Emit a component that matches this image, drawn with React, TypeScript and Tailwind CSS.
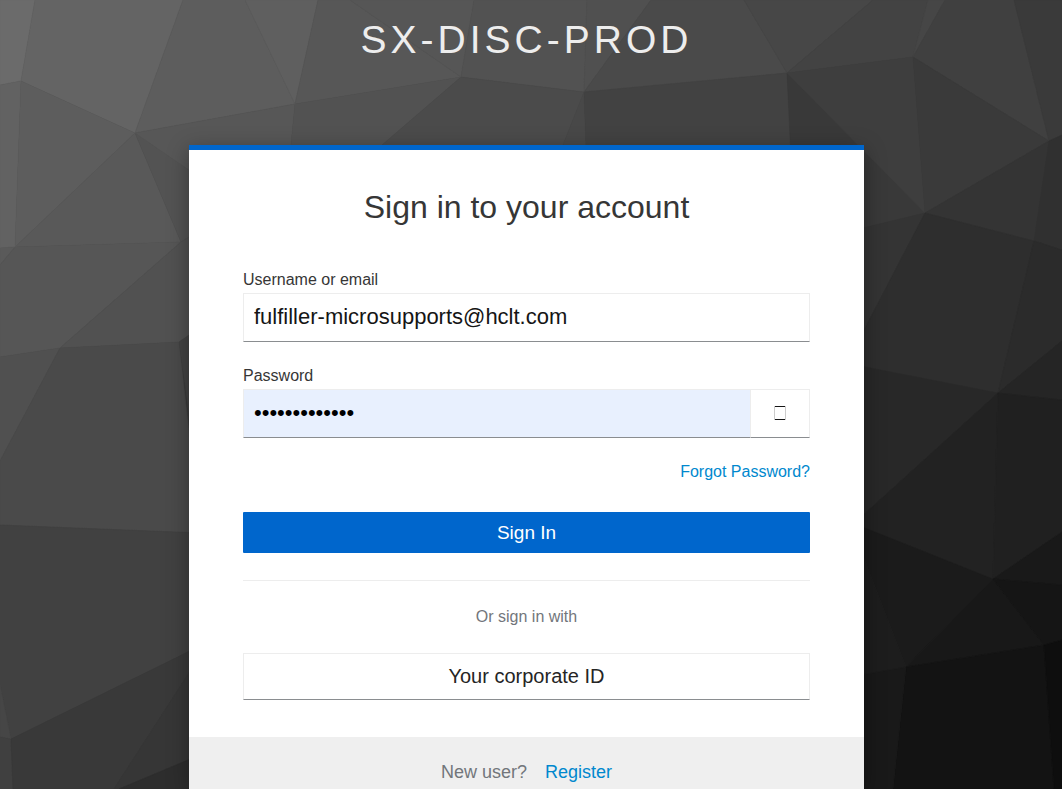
import React, { useState } from "react";

interface Facet {
  points: string;
  fill: string;
}

const facets: Facet[] = [
  // top row
  { points: "0,0 35,0 21,81 0,85", fill: "#6b6b6b" },
  { points: "35,0 183,0 135,133 21,81", fill: "#646464" },
  { points: "183,0 245,0 295,104 135,133", fill: "#5d5d5d" },
  { points: "245,0 318,0 295,104", fill: "#5f5f5f" },
  { points: "318,0 350,0 461,77 295,104", fill: "#575757" },
  { points: "350,0 474,0 461,77", fill: "#565656" },
  { points: "474,0 587,0 584,92 461,77", fill: "#525252" },
  { points: "587,0 651,0 584,92", fill: "#505050" },
  { points: "651,0 744,0 787,73 584,92", fill: "#4a4a4a" },
  { points: "744,0 873,0 787,73", fill: "#474747" },
  { points: "873,0 928,0 913,57 787,73", fill: "#434343" },
  { points: "928,0 945,0 913,57", fill: "#464646" },
  { points: "945,0 1014,0 1049,141 913,57", fill: "#404040" },
  { points: "1014,0 1062,0 1062,135 1049,141", fill: "#3a3a3a" },
  // left side
  { points: "0,85 21,81 15,247 0,248", fill: "#626262" },
  { points: "21,81 135,133 15,247", fill: "#5d5d5d" },
  { points: "135,133 181,242 15,247", fill: "#595959" },
  { points: "135,133 240,205 181,242", fill: "#535353" },
  { points: "135,133 295,104 285,205 240,205", fill: "#575757" },
  { points: "0,248 15,247 0,265", fill: "#5a5a5a" },
  { points: "15,247 181,242 60,348 0,357 0,265", fill: "#565656" },
  { points: "0,357 60,348 0,461", fill: "#505050" },
  { points: "181,242 240,205 240,300 179,342 60,348", fill: "#515151" },
  { points: "60,348 179,342 200,533 0,525 0,461", fill: "#4a4a4a" },
  { points: "179,342 240,300 240,400 190,420", fill: "#434343" },
  { points: "0,525 200,533 200,646 11,739 0,685", fill: "#414141" },
  { points: "0,685 11,739 0,737", fill: "#464646" },
  { points: "0,737 11,739 13,789 0,789", fill: "#404040" },
  { points: "11,739 200,646 200,656 114,789 13,789", fill: "#393939" },
  { points: "200,656 200,755 119,789 114,789", fill: "#363636" },
  { points: "200,755 200,789 119,789", fill: "#2d2d2d" },
  // strip above the card
  { points: "295,104 461,77 382,145 360,200 285,205", fill: "#525252" },
  { points: "461,77 584,92 563,145 540,200 382,200 382,145", fill: "#4b4b4b" },
  { points: "584,92 588,200 540,200 563,145", fill: "#484848" },
  { points: "584,92 787,73 795,200 588,200", fill: "#424242" },
  // right side
  { points: "787,73 925,213 864,228 795,245", fill: "#393939" },
  { points: "787,73 913,57 925,213", fill: "#3e3e3e" },
  { points: "913,57 1049,141 925,213", fill: "#3a3a3a" },
  { points: "1049,141 1034,241 925,213", fill: "#343434" },
  { points: "1049,141 1062,135 1062,250 1034,241", fill: "#303030" },
  { points: "850,231 925,213 850,357", fill: "#343434" },
  { points: "925,213 1034,241 998,393 850,364 850,357", fill: "#2e2e2e" },
  { points: "1034,241 1062,250 1062,341 998,393", fill: "#2b2b2b" },
  { points: "998,393 1062,341 1062,400", fill: "#252525" },
  { points: "850,364 998,393 850,527", fill: "#282828" },
  { points: "998,393 993,579 850,522 850,527", fill: "#222222" },
  { points: "998,393 1062,400 1062,532 993,579", fill: "#202020" },
  { points: "850,522 993,579 906,667", fill: "#1b1b1b" },
  { points: "850,522 906,667 850,677", fill: "#1d1d1d" },
  { points: "993,579 1062,532 1062,585", fill: "#191919" },
  { points: "993,579 1044,645 906,667", fill: "#181818" },
  { points: "993,579 1062,585 1062,640 1044,645", fill: "#151515" },
  { points: "906,667 1044,645 1054,789 893,789", fill: "#131313" },
  { points: "850,677 906,667 893,789 850,789", fill: "#191919" },
  { points: "1044,645 1062,640 1062,789 1054,789", fill: "#0e0e0e" },
];

const Background: React.FC = () => (
  <svg
    className="absolute inset-0 -z-10 h-full w-full"
    viewBox="0 0 1062 789"
    preserveAspectRatio="xMidYMid slice"
    aria-hidden="true"
  >
    {facets.map((facet) => (
      <polygon
        key={facet.points}
        points={facet.points}
        fill={facet.fill}
        stroke={facet.fill}
        strokeWidth="0.5"
      />
    ))}
  </svg>
);

const App: React.FC = () => {
  const [username, setUsername] = useState("fulfiller-microsupports@hclt.com");
  const [password, setPassword] = useState("corporate1234");
  const [visible, setVisible] = useState(false);

  return (
    <div className="relative isolate flex min-h-screen flex-col bg-[#393939] pr-[9px] font-['Liberation_Sans',Arial,sans-serif] text-[#363636]">
      <Background />
      <header className="pt-4 pb-[81px] text-center">
        <h1 className="text-[39px] leading-[48px] tracking-[4px] text-[#ededed] uppercase">
          SX-DISC-PROD
        </h1>
      </header>

      <main className="mx-auto flex w-full max-w-[675px] grow flex-col border-t-[5px] border-[#0066cc] bg-white shadow-[0_5px_20px_rgba(0,0,0,0.35)]">
        <div className="px-[54px] py-[37px]">
          <h2 className="text-center text-[32px] leading-10">
            Sign in to your account
          </h2>

          <form className="pt-[43px]" onSubmit={(e) => e.preventDefault()}>
            <label
              htmlFor="username"
              className="mb-[3px] block text-base leading-5"
            >
              Username or email
            </label>
            <input
              id="username"
              type="text"
              value={username}
              onChange={(e) => setUsername(e.target.value)}
              className="block h-[49px] w-full border border-[#ededed] border-b-[#8a8d90] px-[10px] pb-[2px] text-[22px] text-[#151515] outline-none"
            />

            <label
              htmlFor="password"
              className="mt-6 mb-[3px] block text-base leading-5"
            >
              Password
            </label>
            <div className="flex h-[49px]">
              <input
                id="password"
                type={visible ? "text" : "password"}
                value={password}
                onChange={(e) => setPassword(e.target.value)}
                className="min-w-0 grow border border-r-0 border-[#ededed] border-b-[#8a8d90] bg-[#e8f0fe] px-[10px] pb-[2px] text-[22px] text-black outline-none"
              />
              <button
                type="button"
                aria-label={visible ? "Hide password" : "Show password"}
                onClick={() => setVisible(!visible)}
                className="flex w-[60px] items-center justify-center border border-[#ededed] border-b-[#8a8d90] pb-[2px]"
              >
                <svg width="12" height="14" viewBox="0 0 12 14">
                  <path d="M.5 0v14M11.5 0v14" stroke="#cccccc" />
                  <path d="M1 .5h10M1 13.5h10" stroke="#151515" />
                </svg>
              </button>
            </div>

            <div className="mt-6 text-right text-base leading-5">
              <a href="#forgot" className="text-[#0088ce]">
                Forgot Password?
              </a>
            </div>

            <button
              type="submit"
              className="mt-[30px] block h-[41px] w-full rounded-[1px] bg-[#0066cc] pt-[2px] text-[19px] text-white"
            >
              Sign In
            </button>
          </form>

          <hr className="mt-[27px] border-[#ededed]" />
          <p className="mt-[26px] text-center text-base leading-5 text-[#72767b]">
            Or sign in with
          </p>
          <a
            href="#corporate"
            className="mt-[26px] flex h-[47px] items-center justify-center border border-[#ededed] border-b-[#8a8d90] pb-[2px] text-xl text-[#252525]"
          >
            Your corporate ID
          </a>
        </div>

        <footer className="flex grow items-start justify-center gap-[18px] bg-[#efefef] pt-[25px] text-lg leading-5 text-[#72767b]">
          <span>New user?</span>
          <a href="#register" className="text-[#0088ce]">
            Register
          </a>
        </footer>
      </main>
    </div>
  );
};

export default App;
